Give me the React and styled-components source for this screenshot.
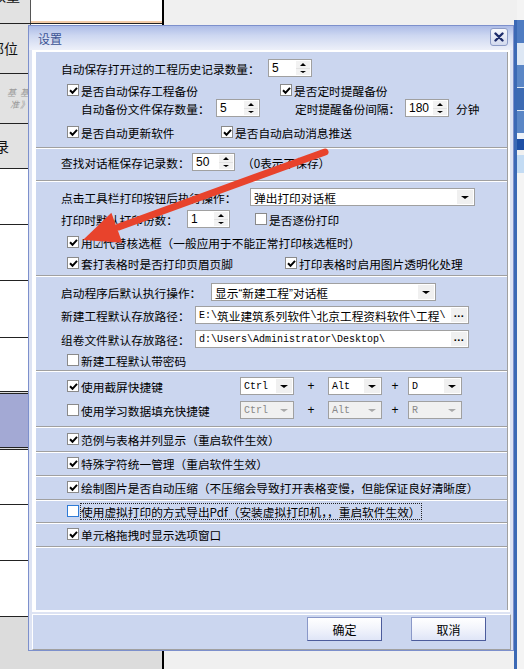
import React from 'react';
import styled, { createGlobalStyle } from 'styled-components';

const GlobalStyle = createGlobalStyle`
  html, body {
    margin: 0;
    padding: 0;
    background: #f0f0f0;
    overflow: hidden;
  }
  body {
    font-family: "Noto Sans CJK SC", "Liberation Sans", "DejaVu Sans", sans-serif;
    font-size: 11.7px;
    color: #000;
  }
`;

const Screen = styled.div`
  position: relative;
  width: 524px;
  height: 669px;
  overflow: hidden;
`;

const Desk = styled.div`
  display: flex;
  height: 100%;
`;

/* background table on the left */
const LeftTable = styled.div`
  width: 162px;
  border-right: 2px solid #000;
  background: #dcdcdc;
  display: flex;
  flex-direction: column;
`;

const TRow = styled.div`
  display: flex;
  height: ${p => p.$h}px;
  border-bottom: ${p => (p.$double ? '3px double #222' : '1px solid #222')};
`;

const HeadCell = styled.div`
  width: 30px;
  border-right: 1px solid #555;
  background: ${p => p.$bg || '#fff'};
  overflow: hidden;
  display: flex;
  flex-direction: column;
  align-items: ${p => (p.$right ? 'flex-end' : 'flex-start')};
  justify-content: ${p => (p.$top ? 'flex-start' : 'center')};
  font-size: 14px;
  color: #111;
  white-space: nowrap;
`;

const WideCell = styled.div`
  flex: 1;
  background: #fff;
  border-bottom: ${p => (p.$peach ? '2px solid #f3cba8' : 'none')};
`;

const CutText = styled.span`
  margin-top: ${p => p.$mt || 0}px;
  margin-left: ${p => p.$ml || 0}px;
  line-height: 1.2;
`;

const Faint = styled.span`
  font-size: 9px;
  color: #9a9a9a;
  font-style: italic;
  line-height: 12px;
  letter-spacing: 1px;
`;

const Middle = styled.div`
  flex: 1;
  background: #f0f0f0;
`;

const RightStrip = styled.div`
  width: 10px;
  display: flex;
`;

const BlueBar = styled.div`
  width: 3px;
  margin-top: 20px;
  background: #3b69b5;
`;

const StripPanel = styled.div`
  flex: 1;
  padding-top: 20px;
  display: flex;
  flex-direction: column;
  background: #f4f4f4;
`;

const StripBlock = styled.div`
  height: ${p => p.$h}px;
  background: ${p => p.$bg};
  border-bottom: ${p => (p.$gap ? '1px solid #dde7f4' : 'none')};
`;

/* the dialog window */
const Dialog = styled.div`
  position: absolute;
  left: 28px;
  top: 25px;
  width: 486px;
  height: 626px;
  box-sizing: border-box;
  border: 1px solid #7d90cc;
  background: #dde3f3;
  display: flex;
  flex-direction: column;
`;

const TitleBar = styled.div`
  height: 24px;
  display: flex;
  align-items: center;
  justify-content: space-between;
  padding: 0 5px 0 9px;
  background: linear-gradient(to bottom, #adbce7 0%, #cdd7f1 40%, #edf0f9 100%);
`;

const Title = styled.span`
  font-size: 12px;
  color: #3b5394;
`;

const CloseBtn = styled.div`
  width: 16px;
  height: 16px;
  align-self: flex-start;
  margin-top: 2px;
  border: 1px solid #8d9cc6;
  border-radius: 3px;
  background: linear-gradient(to bottom, #f7f8fd, #d3daee);
  display: flex;
  align-items: center;
  justify-content: center;
`;

const PanelWrap = styled.div`
  margin: 0 3px;
  border: 2px solid #fff;
  border-left-width: 4px;
`;

const Panel = styled.div`
  height: 558px;
  background: #cbd6ef;
  border-right: 1px solid #a0a0a0;
  display: flex;
  flex-direction: column;
`;

const Section = styled.div`
  height: ${p => p.$h}px;
  padding-left: 25px;
  border-top: ${p => (p.$first ? 'none' : '1px solid #fff')};
  border-bottom: 1px solid #a0a0a0;
  display: flex;
  flex-direction: column;
`;

const Filler = styled.div`
  flex: 1;
  border-top: 1px solid #fff;
`;

const Row = styled.div`
  height: 18px;
  margin-top: ${p => p.$mt || 0}px;
  padding-left: ${p => p.$indent || 0}px;
  display: flex;
  align-items: center;
  white-space: nowrap;
`;

const Cell = styled.div`
  width: ${p => p.$w}px;
  flex: none;
  display: flex;
  align-items: center;
`;

const Note = styled.span`
  margin-left: ${p => p.$ml || 0}px;
`;

const Quote = styled.span`
  font-family: "Liberation Sans", Arial, sans-serif;
`;

const CheckWrap = styled.div`
  display: flex;
  align-items: center;
`;

const Box = styled.div`
  width: 12px;
  height: 12px;
  box-sizing: border-box;
  border: 1px solid ${p => (p.$blue ? '#2f7bd6' : '#8a8a8a')};
  background: #fff;
  margin-right: 2px;
  display: flex;
  align-items: center;
  justify-content: center;
`;

const CheckLabel = styled.span`
  outline: ${p => (p.$focus ? '1px dotted #222' : 'none')};
  outline-offset: 0;
  line-height: 15px;
`;

const Field = styled.div`
  width: ${p => p.$w}px;
  height: 18px;
  box-sizing: border-box;
  border: 1px solid #a0a0a0;
  background: ${p => (p.$disabled ? '#f0f0f0' : '#fff')};
  display: flex;
  align-items: stretch;
  flex: none;
`;

const FieldText = styled.div`
  flex: 1;
  overflow: hidden;
  white-space: nowrap;
  padding-left: 3px;
  display: flex;
  align-items: center;
  color: ${p => (p.$disabled ? '#888' : '#000')};
  font-family: ${p =>
    p.$mono
      ? '"Liberation Mono", "DejaVu Sans Mono", monospace'
      : p.$num
      ? '"Liberation Sans", Arial, sans-serif'
      : 'inherit'};
  font-size: ${p => (p.$mono ? '10px' : p.$num ? '12px' : 'inherit')};
`;

const Lat = styled.span`
  font-family: "Liberation Mono", "DejaVu Sans Mono", monospace;
  font-size: 10px;
`;

const SideBtn = styled.div`
  width: 16px;
  margin: 1px;
  background: #f0f0f0;
  display: flex;
  align-items: center;
  justify-content: center;
`;

const SpinBtns = styled.div`
  width: 14px;
  margin: 1px;
  display: flex;
  flex-direction: column;
`;

const SpinHalf = styled.div`
  flex: 1;
  background: #f2f2f2;
  display: flex;
  align-items: center;
  justify-content: center;
  border-bottom: ${p => (p.$top ? '1px solid #e2e2e2' : 'none')};
`;

const Tri = styled.div`
  width: 0;
  height: 0;
  border-left: ${p => p.$s}px solid transparent;
  border-right: ${p => p.$s}px solid transparent;
  ${p =>
    p.$up
      ? `border-bottom: ${Math.ceil(p.$s * 0.8)}px solid ${p.$c || '#000'};`
      : `border-top: ${Math.ceil(p.$s * 0.6)}px solid ${p.$c || '#000'};`}
`;

const Dots = styled.span`
  font-family: "Liberation Sans", Arial, sans-serif;
  font-weight: bold;
  font-size: 11px;
  letter-spacing: 0.5px;
  margin-top: -5px;
`;

const Plus = styled.div`
  width: ${p => p.$w}px;
  text-align: center;
  font-family: "Liberation Sans", Arial, sans-serif;
  font-size: 12px;
  flex: none;
`;

const ButtonBar = styled.div`
  margin: 2px 2px 0 3px;
  height: 32px;
  border-top: 1px solid #fff;
  border-left: 1px solid #fff;
  border-right: 1px solid #a0a0a0;
  border-bottom: 1px solid #a0a0a0;
  background: #cbd6ef;
  display: flex;
  justify-content: flex-end;
  align-items: flex-start;
  padding: 2px 24px 0 0;
  gap: 29px;
`;

const Button = styled.div`
  width: 75px;
  height: 24px;
  box-sizing: border-box;
  border: 1px solid #8a98c8;
  border-right-color: #4c5c9c;
  border-bottom-color: #4c5c9c;
  background: linear-gradient(to bottom, #ffffff 0%, #f3f5fc 45%, #dfe5f7 100%);
  display: flex;
  align-items: center;
  justify-content: center;
  font-size: 12px;
`;

const ArrowLayer = styled.svg`
  position: absolute;
  left: 0;
  top: 0;
  pointer-events: none;
`;

const Check = ({ checked, focus, blue, children }) => (
  <CheckWrap>
    <Box $blue={blue}>
      {checked && (
        <svg width="9" height="9" viewBox="0 0 9 9">
          <path d="M1 4.3 L3.5 6.8 L8 1.8" fill="none" stroke="#000" strokeWidth="2" />
        </svg>
      )}
    </Box>
    <CheckLabel $focus={focus}>{children}</CheckLabel>
  </CheckWrap>
);

const Spin = ({ w, value }) => (
  <Field $w={w}>
    <FieldText $num>{value}</FieldText>
    <SpinBtns>
      <SpinHalf $top>
        <Tri $up $s={3} />
      </SpinHalf>
      <SpinHalf>
        <Tri $s={3} />
      </SpinHalf>
    </SpinBtns>
  </Field>
);

const Select = ({ w, value, mono, disabled }) => (
  <Field $w={w} $disabled={disabled}>
    <FieldText $mono={mono} $disabled={disabled}>{value}</FieldText>
    <SideBtn>
      <Tri $s={4} $c={disabled ? '#a8a8a8' : '#000'} />
    </SideBtn>
  </Field>
);

const PathField = ({ children }) => (
  <Field $w={274}>
    <FieldText>{children}</FieldText>
    <SideBtn>
      <Dots>...</Dots>
    </SideBtn>
  </Field>
);

const Arrow = () => {
  const tip = [83, 240];
  const tail = [325, 152];
  const dx = tail[0] - tip[0];
  const dy = tail[1] - tip[1];
  const len = Math.hypot(dx, dy);
  const ux = dx / len;
  const uy = dy / len;
  const base = [tip[0] + ux * 36, tip[1] + uy * 36];
  const px = -uy;
  const py = ux;
  const a = [base[0] + px * 16, base[1] + py * 16];
  const b = [base[0] - px * 16, base[1] - py * 16];
  return (
    <ArrowLayer width="524" height="669">
      <line x1={tail[0]} y1={tail[1]} x2={base[0] + ux * 2} y2={base[1] + uy * 2} stroke="#e8432c" strokeWidth="7" strokeLinecap="round" />
      <polygon points={`${tip[0]},${tip[1]} ${a[0]},${a[1]} ${b[0]},${b[1]}`} fill="#e8432c" />
    </ArrowLayer>
  );
};

const App = () => (
  <Screen>
    <GlobalStyle />
    <Desk>
      <LeftTable>
        <TRow $h={23}>
          <HeadCell $bg="#e2e2e2" $top>
            <CutText $mt={-13} $ml={-8}>数量</CutText>
          </HeadCell>
          <WideCell $peach />
        </TRow>
        <TRow $h={49}>
          <HeadCell $bg="#e2e2e2">
            <CutText $ml={-10}>部位</CutText>
          </HeadCell>
          <WideCell />
        </TRow>
        <TRow $h={49}>
          <HeadCell $bg="#e2e2e2" $right>
            <Faint>基 基</Faint>
            <Faint>准》</Faint>
          </HeadCell>
          <WideCell />
        </TRow>
        <TRow $h={44}>
          <HeadCell $bg="#e2e2e2">
            <CutText $ml={-5}>录</CutText>
          </HeadCell>
          <WideCell />
        </TRow>
        <TRow $h={55}><HeadCell /><WideCell /></TRow>
        <TRow $h={55}><HeadCell /><WideCell /></TRow>
        <TRow $h={56}><HeadCell /><WideCell /></TRow>
        <TRow $h={53} $double><HeadCell /><WideCell /></TRow>
        <TRow $h={53} $double><HeadCell $bg="#a3a9d4" /><WideCell /></TRow>
        <TRow $h={54}><HeadCell /><WideCell /></TRow>
        <TRow $h={55}><HeadCell /><WideCell /></TRow>
        <TRow $h={55}><HeadCell /><WideCell /></TRow>
      </LeftTable>
      <Middle />
      <RightStrip>
        <BlueBar />
        <StripPanel>
          <StripBlock $h={23} $bg="#4f7cc2" />
          <StripBlock $h={22} $bg="#dde7f4" />
          <StripBlock $h={22} $bg="#5a86c6" $gap />
          <StripBlock $h={22} $bg="#3d6bb3" $gap />
          <StripBlock $h={22} $bg="#5a86c6" />
          <StripBlock $h={6} $bg="#eef2f8" />
          <StripBlock $h={11} $bg="#1d4fa5" />
          <StripBlock $h={5} $bg="#f0f0f0" />
          <StripBlock $h={18} $bg="#c3dbf3" />
        </StripPanel>
      </RightStrip>
    </Desk>

    <Dialog>
      <TitleBar>
        <Title>设置</Title>
        <CloseBtn>
          <svg width="10" height="10" viewBox="0 0 10 10">
            <path d="M1.5 1.5 L8.5 8.5 M8.5 1.5 L1.5 8.5" stroke="#1f2d6b" strokeWidth="2.4" strokeLinecap="round" />
          </svg>
        </CloseBtn>
      </TitleBar>

      <PanelWrap>
        <Panel>
          <Section $first $h={95}>
            <Row $mt={7}>
              <Cell $w={207}>自动保存打开过的工程历史记录数量：</Cell>
              <Spin w={44} value="5" />
            </Row>
            <Row $mt={4} $indent={6}>
              <Cell $w={213}>
                <Check checked>是否自动保存工程备份</Check>
              </Cell>
              <Check checked>是否定时提醒备份</Check>
            </Row>
            <Row $mt={0} $indent={20}>
              <Cell $w={214}>
                <Cell $w={135}>自动备份文件保存数量：</Cell>
                <Spin w={44} value="5" />
              </Cell>
              <Cell $w={110}>定时提醒备份间隔：</Cell>
              <Spin w={44} value="180" />
              <Note $ml={7}>分钟</Note>
            </Row>
            <Row $mt={6} $indent={6}>
              <Cell $w={154}>
                <Check checked>是否自动更新软件</Check>
              </Cell>
              <Check checked>是否自动启动消息推送</Check>
            </Row>
          </Section>

          <Section $h={31}>
            <Row $mt={4}>
              <Cell $w={131}>查找对话框保存记录数：</Cell>
              <Spin w={43} value="50" />
              <Note $ml={7}>（0表示不保存）</Note>
            </Row>
          </Section>

          <Section $h={93}>
            <Row $mt={6}>
              <Cell $w={189}>点击工具栏打印按钮后执行操作：</Cell>
              <Select w={225} value="弹出打印对话框" />
            </Row>
            <Row $mt={4}>
              <Cell $w={194}>
                <Cell $w={126}>打印时默认打印份数：</Cell>
                <Spin w={43} value="1" />
              </Cell>
              <Check>是否逐份打印</Check>
            </Row>
            <Row $mt={5} $indent={6}>
              <Check checked>用☑代替核选框（一般应用于不能正常打印核选框时）</Check>
            </Row>
            <Row $mt={3} $indent={6}>
              <Cell $w={218}>
                <Check checked>套打表格时是否打印页眉页脚</Check>
              </Cell>
              <Check checked>打印表格时启用图片透明化处理</Check>
            </Row>
          </Section>

          <Section $h={93}>
            <Row $mt={6}>
              <Cell $w={150}>启动程序后默认执行操作：</Cell>
              <Select
                w={225}
                value={<>显示<Quote>“</Quote>新建工程<Quote>”</Quote>对话框</>}
              />
            </Row>
            <Row $mt={5}>
              <Cell $w={134}>新建工程默认存放路径：</Cell>
              <PathField>
                <Lat>E:{'\\'}</Lat>筑业建筑系列软件<Lat>{'\\'}</Lat>北京工程资料软件<Lat>{'\\'}</Lat>工程<Lat>{'\\'}</Lat>
              </PathField>
            </Row>
            <Row $mt={6}>
              <Cell $w={134}>组卷文件默认存放路径：</Cell>
              <PathField>
                <Lat>d:{'\\'}Users{'\\'}Administrator{'\\'}Desktop{'\\'}</Lat>
              </PathField>
            </Row>
            <Row $mt={3} $indent={6}>
              <Check>新建工程默认带密码</Check>
            </Row>
          </Section>

          <Section $h={54}>
            <Row $mt={5} $indent={6}>
              <Cell $w={173}>
                <Check checked>使用截屏快捷键</Check>
              </Cell>
              <Select w={54} value="Ctrl" mono />
              <Plus $w={34}>+</Plus>
              <Select w={54} value="Alt" mono />
              <Plus $w={26}>+</Plus>
              <Select w={54} value="D" mono />
            </Row>
            <Row $mt={6} $indent={6}>
              <Cell $w={173}>
                <Check>使用学习数据填充快捷键</Check>
              </Cell>
              <Select w={54} value="Ctrl" mono disabled />
              <Plus $w={34}>+</Plus>
              <Select w={54} value="Alt" mono disabled />
              <Plus $w={26}>+</Plus>
              <Select w={54} value="R" mono disabled />
            </Row>
          </Section>

          <Section $h={23}>
            <Row $mt={2} $indent={6}>
              <Check checked>范例与表格并列显示（重启软件生效）</Check>
            </Row>
          </Section>
          <Section $h={22}>
            <Row $mt={1} $indent={6}>
              <Check checked>特殊字符统一管理（重启软件生效）</Check>
            </Row>
          </Section>
          <Section $h={22}>
            <Row $mt={1} $indent={6}>
              <Check checked>绘制图片是否自动压缩（不压缩会导致打开表格变慢，但能保证良好清晰度）</Check>
            </Row>
          </Section>
          <Section $h={21}>
            <Row $mt={1} $indent={6}>
              <Check blue focus>使用虚拟打印的方式导出Pdf（安装虚拟打印机，，重启软件生效）</Check>
            </Row>
          </Section>
          <Section $h={22}>
            <Row $mt={1} $indent={6}>
              <Check checked>单元格拖拽时显示选项窗口</Check>
            </Row>
          </Section>
          <Filler />
        </Panel>
      </PanelWrap>

      <ButtonBar>
        <Button>确定</Button>
        <Button>取消</Button>
      </ButtonBar>
    </Dialog>

    <Arrow />
  </Screen>
);

export default App;
